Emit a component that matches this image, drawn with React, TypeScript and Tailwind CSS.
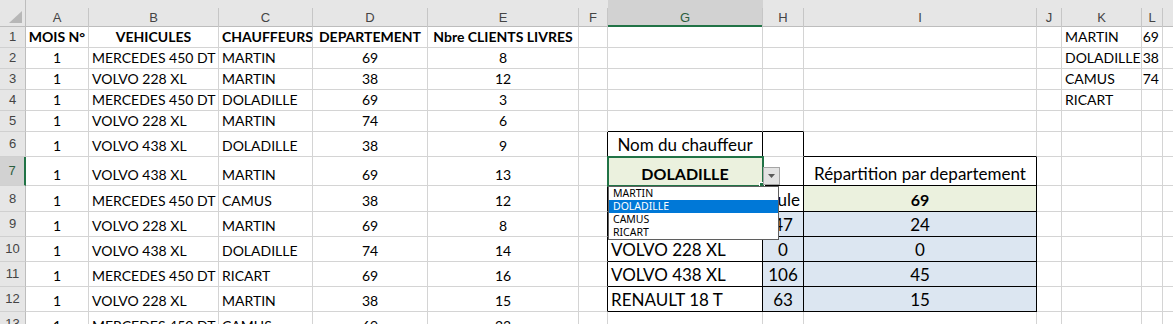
import React from "react";

type Spec = {
  t: string;
  a?: "l" | "c" | "r";
  b?: boolean;
  big?: boolean;
  bg?: "green" | "blue";
};

const COLS = ["A", "B", "C", "D", "E", "F", "G", "H", "I", "J", "K", "L", "M"];
const HEIGHTS: Record<number, string> = {
  1: "h-[21px]",
  2: "h-[21px]",
  3: "h-[21px]",
  4: "h-[21px]",
  5: "h-[21px]",
  6: "h-[25px]",
  7: "h-[29px]",
  8: "h-[26px]",
  9: "h-[25px]",
  10: "h-[25px]",
  11: "h-[25px]",
  12: "h-[25px]",
  13: "h-[25px]",
};

const trips: [string, string, string, string][] = [
  ["MERCEDES 450 DT", "MARTIN", "69", "8"],
  ["VOLVO 228 XL", "MARTIN", "38", "12"],
  ["MERCEDES 450 DT", "DOLADILLE", "69", "3"],
  ["VOLVO 228 XL", "MARTIN", "74", "6"],
  ["VOLVO 438 XL", "DOLADILLE", "38", "9"],
  ["VOLVO 438 XL", "MARTIN", "69", "13"],
  ["MERCEDES 450 DT", "CAMUS", "38", "12"],
  ["VOLVO 228 XL", "MARTIN", "69", "8"],
  ["VOLVO 438 XL", "DOLADILLE", "74", "14"],
  ["MERCEDES 450 DT", "RICART", "69", "16"],
  ["VOLVO 228 XL", "MARTIN", "38", "15"],
  ["MERCEDES 450 DT", "CAMUS", "69", "23"],
];

const sheet: Record<number, Record<string, Spec>> = {};
for (let r = 1; r <= 13; r++) sheet[r] = {};

sheet[1] = {
  A: { t: "MOIS N°", a: "c", b: true },
  B: { t: "VEHICULES", a: "c", b: true },
  C: { t: "CHAUFFEURS", a: "l", b: true },
  D: { t: "DEPARTEMENT", a: "c", b: true },
  E: { t: "Nbre CLIENTS LIVRES", a: "c", b: true },
};
trips.forEach(([veh, drv, dep, n], i) => {
  const r = i + 2;
  sheet[r].A = { t: "1", a: "c" };
  sheet[r].B = { t: veh, a: "l" };
  sheet[r].C = { t: drv, a: "l" };
  sheet[r].D = { t: dep, a: "c" };
  sheet[r].E = { t: n, a: "c" };
});

// liste des chauffeurs
sheet[1].K = { t: "MARTIN", a: "l" };
sheet[2].K = { t: "DOLADILLE", a: "l" };
sheet[3].K = { t: "CAMUS", a: "l" };
sheet[4].K = { t: "RICART", a: "l" };
sheet[1].L = { t: "69", a: "r" };
sheet[2].L = { t: "38", a: "r" };
sheet[3].L = { t: "74", a: "r" };

// tableau de synthese
sheet[6].G = { t: "Nom du chauffeur", a: "c", big: true };
sheet[7].G = { t: "DOLADILLE", a: "c", big: true, b: true, bg: "green" };
sheet[7].I = { t: "Répartition par departement", a: "c", big: true };
sheet[8].H = { t: "Véhicule", a: "r", big: true };
sheet[8].I = { t: "69", a: "c", big: true, b: true, bg: "green" };
const recap: [string, string, string][] = [
  ["MERCEDES 450 DT", "47", "24"],
  ["VOLVO 228 XL", "0", "0"],
  ["VOLVO 438 XL", "106", "45"],
  ["RENAULT 18 T", "63", "15"],
];
recap.forEach(([veh, tot, dep], i) => {
  const r = i + 9;
  sheet[r].G = { t: veh, a: "l", big: true };
  sheet[r].H = { t: tot, a: "c", big: true, bg: "blue" };
  sheet[r].I = { t: dep, a: "c", big: true, bg: "blue" };
});

const rightBlack = (r: number, c: string) =>
  ((c === "F" || c === "G") && (r === 6 || (r >= 8 && r <= 12))) ||
  (c === "H" && r >= 6 && r <= 12) ||
  (c === "I" && r >= 7 && r <= 12);

const bottomBlack = (r: number, c: string) =>
  (r === 5 && (c === "G" || c === "H")) ||
  (r === 6 && (c === "G" || c === "I")) ||
  (r >= 7 && r <= 12 && (c === "G" || c === "H" || c === "I"));

const Cell = ({ r, c }: { r: number; c: string }) => {
  const s = sheet[r][c];
  const align =
    s?.a === "c" ? "justify-center" : s?.a === "r" ? "justify-end pr-[3px]" : "justify-start pl-[3px]";
  const bg = s?.bg === "green" ? "bg-[#ebf1de]" : s?.bg === "blue" ? "bg-[#dce6f1]" : "bg-white";
  const selected = r === 7 && c === "G";
  const size = s?.big
    ? s.b
      ? "text-[16px] leading-[21px]"
      : "text-[17px] leading-[21px]"
    : "text-[14px] leading-[18px]";
  return (
    <div
      className={`flex items-end pb-[1px] border-r border-b whitespace-nowrap ${align} ${bg} ${
        rightBlack(r, c) ? "border-r-black" : "border-r-[#d4d4d4]"
      } ${bottomBlack(r, c) ? "border-b-black" : "border-b-[#d4d4d4]"} ${
        selected ? "relative z-10 outline-2 outline-[#217346] -outline-offset-1" : ""
      }`}
    >
      {s && <span className={`${size} ${s.b ? "font-bold" : ""} text-black`}>{s.t}</span>}
      {selected && (
        <div className="absolute -right-[3px] -bottom-[3px] w-[6px] h-[6px] bg-[#217346] border border-white" />
      )}
    </div>
  );
};

export default function App() {
  const rows = Array.from({ length: 13 }, (_, i) => i + 1);
  return (
    <div className="relative w-[1173px] h-[324px] overflow-hidden bg-white font-['Lato',sans-serif]">
      <div className="grid grid-cols-[26px_63px_130px_94px_115px_151px_29px_155px_41px_233px_25px_80px_21px_64px]">
        {/* coin */}
        <div className="h-[27px] bg-[#e6e6e6] border-r border-b border-[#bdbdbd] flex items-end justify-end pr-[3px] pb-[3px]">
          <svg width="13" height="12" viewBox="0 0 13 12">
            <path d="M13 0 L13 12 L0 12 Z" fill="#b7b7b7" />
          </svg>
        </div>
        {COLS.map((c) => (
          <div
            key={c}
            className={`h-[27px] flex flex-col ${
              c === "G" ? "bg-[#d2d2d2] border-b-2 border-[#217346]" : "bg-[#e6e6e6] border-b border-[#bdbdbd]"
            }`}
          >
            <div
              className={`mt-[8px] flex-1 flex items-center justify-center border-r border-[#c6c6c6] font-['Liberation_Sans',sans-serif] text-[13px] ${
                c === "G" ? "text-[#2b5e3e]" : "text-[#444]"
              }`}
            >
              {c}
            </div>
          </div>
        ))}
        {rows.map((r) => (
          <React.Fragment key={r}>
            <div
              className={`${HEIGHTS[r]} flex items-center justify-center border-b border-b-[#d0d0d0] font-['Liberation_Sans',sans-serif] text-[13px] ${
                r === 7
                  ? "bg-[#d2d2d2] border-r-2 border-r-[#217346] text-[#2b5e3e]"
                  : "bg-[#e6e6e6] border-r border-r-[#bdbdbd] text-[#444]"
              }`}
            >
              {r}
            </div>
            {COLS.map((c) => (
              <Cell key={c} r={r} c={c} />
            ))}
          </React.Fragment>
        ))}
      </div>

      {/* bouton de la liste deroulante */}
      <div className="absolute left-[763px] top-[167px] w-[17px] h-[18px] z-20 bg-[#e3e3e3] border border-[#a5a5a5] flex items-center justify-center">
        <svg width="7" height="4" viewBox="0 0 7 4">
          <path d="M0 0 L7 0 L3.5 4 Z" fill="#5a5a5a" />
        </svg>
      </div>

      {/* liste ouverte */}
      <div className="absolute left-[608px] top-[186px] w-[171px] z-30 bg-white border border-[#5f5f5f] font-['Noto_Sans',sans-serif] text-[10.5px] leading-[13px]">
        {["MARTIN", "DOLADILLE", "CAMUS", "RICART"].map((n) => (
          <div
            key={n}
            className={`h-[13px] pl-[4px] ${n === "DOLADILLE" ? "bg-[#0078d7] text-white" : "text-black"}`}
          >
            {n}
          </div>
        ))}
      </div>
    </div>
  );
}
